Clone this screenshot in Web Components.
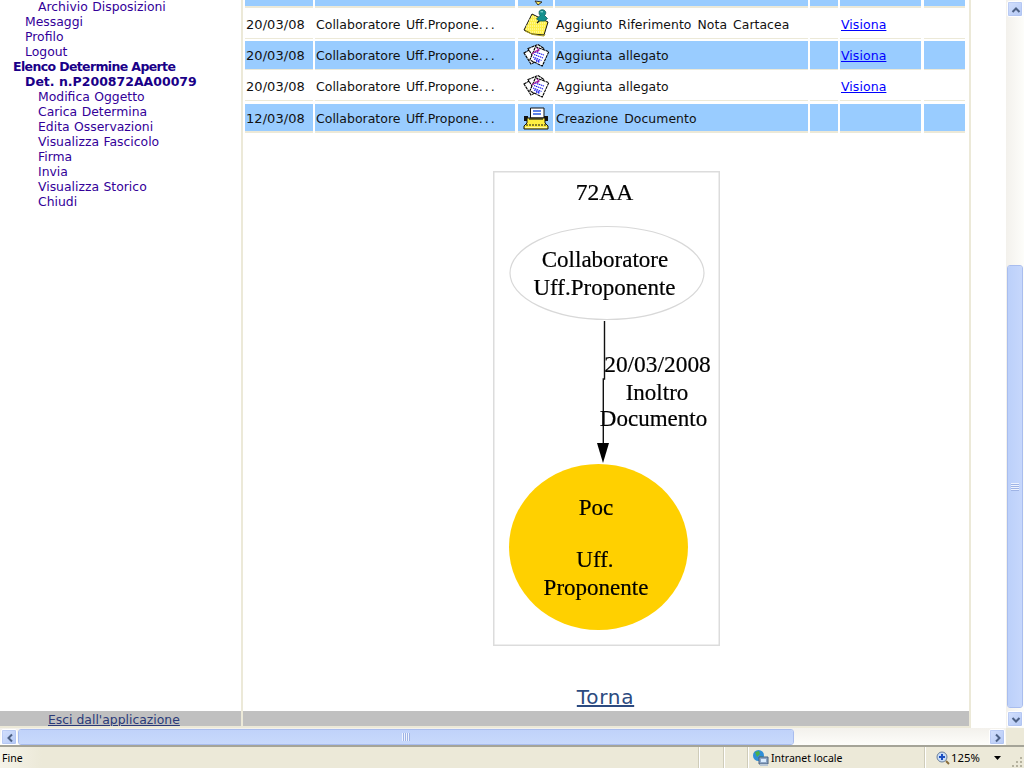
<!DOCTYPE html>
<html lang="it"><head><meta charset="utf-8"><title>Storico</title>
<style>html,body{margin:0;padding:0;height:100%;overflow:hidden;background:#fff}</style>
</head><body>
<app-window>
  <side-frame slot="side">
    <menu-link level="2">Archivio Disposizioni</menu-link>
    <menu-link level="1">Messaggi</menu-link>
    <menu-link level="1">Profilo</menu-link>
    <menu-link level="1">Logout</menu-link>
    <menu-link level="0" strong tight>Elenco Determine Aperte</menu-link>
    <menu-link level="1" strong>Det. n.P200872AA00079</menu-link>
    <menu-link level="2">Modifica Oggetto</menu-link>
    <menu-link level="2">Carica Determina</menu-link>
    <menu-link level="2">Edita Osservazioni</menu-link>
    <menu-link level="2">Visualizza Fascicolo</menu-link>
    <menu-link level="2">Firma</menu-link>
    <menu-link level="2">Invia</menu-link>
    <menu-link level="2">Visualizza Storico</menu-link>
    <menu-link level="2">Chiudi</menu-link>
  </side-frame>
  <main-frame slot="main">
    <data-row h="26" b="2" g="0" alt>
      <data-cell></data-cell><data-cell></data-cell><data-cell><app-icon name="stub"></app-icon></data-cell><data-cell></data-cell><data-cell></data-cell><data-cell></data-cell><data-cell></data-cell>
    </data-row>
    <data-row h="30" b="1" g="2" nudge>
      <data-cell>20/03/08</data-cell><data-cell>Collaboratore Uff.Propone<span style="letter-spacing:2px">...</span></data-cell><data-cell><app-icon name="note"></app-icon></data-cell><data-cell>Aggiunto Riferimento Nota Cartacea</data-cell><data-cell></data-cell><data-cell><a-link>Visiona</a-link></data-cell><data-cell></data-cell>
    </data-row>
    <data-row h="28" b="1" g="2" alt>
      <data-cell>20/03/08</data-cell><data-cell>Collaboratore Uff.Propone<span style="letter-spacing:2px">...</span></data-cell><data-cell><app-icon name="papers"></app-icon></data-cell><data-cell>Aggiunta allegato</data-cell><data-cell></data-cell><data-cell><a-link>Visiona</a-link></data-cell><data-cell></data-cell>
    </data-row>
    <data-row h="28" b="1" g="3">
      <data-cell>20/03/08</data-cell><data-cell>Collaboratore Uff.Propone<span style="letter-spacing:2px">...</span></data-cell><data-cell><app-icon name="papers"></app-icon></data-cell><data-cell>Aggiunta allegato</data-cell><data-cell></data-cell><data-cell><a-link>Visiona</a-link></data-cell><data-cell></data-cell>
    </data-row>
    <data-row h="27" b="2" g="0" alt nudge>
      <data-cell>12/03/08</data-cell><data-cell>Collaboratore Uff.Propone<span style="letter-spacing:2px">...</span></data-cell><data-cell><app-icon name="typewriter"></app-icon></data-cell><data-cell>Creazione Documento</data-cell><data-cell></data-cell><data-cell></data-cell><data-cell></data-cell>
    </data-row>
    <flow-chart></flow-chart>
    <back-link>Torna</back-link>
  </main-frame>
</app-window>
<script>
function tpl(html){const t=document.createElement('template');t.innerHTML=html;return t;}
function def(name,html,extra){
  const t=tpl(html);
  customElements.define(name,class extends HTMLElement{
    constructor(){super();this.attachShadow({mode:'open'}).appendChild(t.content.cloneNode(true));}
    connectedCallback(){if(extra)extra(this);}
  });
}
const FONT='"DejaVu Sans",Verdana,sans-serif';
const chevron=(d)=>`<svg width="16" height="16" viewBox="0 0 16 16"><path d="${d}" fill="none" stroke="#4d6185" stroke-width="2"/></svg>`;
def('scroll-btn',`<style>:host{display:block;width:16px;height:16px;box-sizing:border-box;border:1px solid #fff;border-radius:2px;background:linear-gradient(135deg,#d3e0fd,#b5c9f5);box-shadow:0 0 0 .5px #a9bdee inset;overflow:hidden}
svg{display:block;margin:-1px}</style><slot></slot>`);
def('v-scrollbar',`<style>:host{display:flex;flex-direction:column;width:18px;box-sizing:border-box;padding:1px;background:linear-gradient(90deg,#f3f1ec,#fdfdfa)}
.track{flex:1;position:relative;display:flex;flex-direction:column;padding-top:248px;padding-bottom:3px}
.thumb{flex:1;box-sizing:border-box;border:1px solid #fff;border-radius:3px;background:linear-gradient(90deg,#bcd0fa,#c6d7fc);outline:1px solid #a9bdee;outline-offset:-1px;display:flex;align-items:center;justify-content:center}
.grip{width:8px;height:8px;background:repeating-linear-gradient(180deg,#eef3fe 0 1px,#9fb4e6 1px 2px)}</style>
<scroll-btn>${chevron('M4.5 10l3.5-3.5 3.5 3.5')}</scroll-btn>
<div class="track"><div class="thumb"><div class="grip"></div></div></div>
<scroll-btn>${chevron('M4.5 6l3.5 3.5 3.5-3.5')}</scroll-btn>`);
def('h-scrollbar',`<style>:host{display:flex;height:17px;box-sizing:border-box;background:linear-gradient(180deg,#f3f1ec,#fdfdfa)}
.wrap{width:1006px;display:flex;padding:1px 1px 0 1px;box-sizing:border-box}
.thumb{width:776px;margin-left:1px;box-sizing:border-box;height:16px;border:1px solid #fff;border-radius:3px;background:linear-gradient(180deg,#c0d2fa,#c8d9fc);outline:1px solid #a9bdee;outline-offset:-1px;display:flex;align-items:center;justify-content:center}
.grip{width:8px;height:8px;background:repeating-linear-gradient(90deg,#eef3fe 0 1px,#9fb4e6 1px 2px)}
.sp{flex:1}.corner{flex:1;background:#ece9d8}</style>
<div class="wrap"><scroll-btn>${chevron('M10 4.5L6.5 8l3.5 3.5')}</scroll-btn><div class="thumb"><div class="grip"></div></div><div class="sp"></div><scroll-btn>${chevron('M6 4.5L9.5 8 6 11.5')}</scroll-btn></div><div class="corner"></div>`);
def('status-pane',`<style>:host{display:flex;align-items:center;gap:2px;box-sizing:border-box;height:100%;border-left:1px solid #cfccb9;box-shadow:inset 1px 0 0 #fff;padding-left:4px;white-space:nowrap}
:host([first]){border:0;box-shadow:none;padding-left:2px;flex:1;background:linear-gradient(90deg,#f5f3e9,#ece9d8 42px)}</style><slot></slot>`,
 el=>{if(el.hasAttribute('w'))el.style.width=el.getAttribute('w')+'px';});
def('status-bar',`<style>:host{display:flex;height:23px;box-sizing:border-box;background:#ece9d8;border-top:2px solid #a5a498;color:#000;font:10.5px "Noto Sans",Tahoma,sans-serif;align-items:stretch}
.grip{width:12px;position:relative}
svg{display:block}</style>
<status-pane first>Fine</status-pane>
<status-pane w="25"></status-pane><status-pane w="24"></status-pane>
<status-pane w="177"><svg width="17" height="18" viewBox="0 0 17 18"><circle cx="6.5" cy="6.5" r="5.5" fill="#2f8fd8"/><path d="M3 3l4-1 1 3-3 3zM8 7l3 1-1 3z" fill="#4bb04b"/><path d="M7 8h9v7H7z" fill="#8ea6c6" stroke="#47617f"/><path d="M9 10h5v3H9z" fill="#d9ecff"/><path d="M8 15h8v2H8z" fill="#b9c7d6"/></svg><span>Intranet locale</span></status-pane>
<status-pane w="88" style="gap:1px;padding-left:11px"><svg width="14" height="14" viewBox="0 0 14 14"><circle cx="6" cy="6" r="5" fill="#c9ddf7" stroke="#6b7f99"/><path d="M6 3v6M3 6h6" stroke="#1c4fc0" stroke-width="2"/><path d="M10 10l3 3" stroke="#8a6c3a" stroke-width="2"/></svg><span style="font-size:11.3px">125%</span><svg style="margin-left:13px" width="7" height="4" viewBox="0 0 7 4"><path d="M0 0h7L3.5 4z" fill="#000"/></svg></status-pane>
<div class="grip"><svg width="12" height="20" viewBox="0 0 12 20" style="position:absolute;right:1px;bottom:0"><g fill="#b5b29f"><path d="M9 9h2v2H9zM5 13h2v2H5zM9 13h2v2H9zM1 17h2v2H1zM5 17h2v2H5zM9 17h2v2H9z"/></g></svg></div>`);
def('app-window',`<style>:host{display:grid;grid-template-rows:728px 17px 23px;width:1024px;height:768px;overflow:hidden;font:13px ${FONT};color:#111}
.view{display:flex;min-height:0}
.page{width:1006px;display:grid;grid-template-columns:241px 730px 35px;background:#fff;min-height:0}
.gap{background:#fff;height:727px}
::slotted(*){min-width:0}</style>
<div class="view"><div class="page"><slot name="side"></slot><slot name="main"></slot><div class="gap"></div></div><v-scrollbar></v-scrollbar></div>
<h-scrollbar></h-scrollbar>
<status-bar></status-bar>`);
def('frame-box',`<style>:host{display:grid;grid-template-rows:711px 15px 2px;height:728px;box-sizing:border-box}
.body{overflow:hidden;min-height:0;background:#fff;border-right:2px solid #ece9d8}
.foot{background:#c0c0c0;border-right:2px solid #ece9d8;overflow:hidden}
.base{background:#ece9d8}</style>
<div class="body"><slot></slot></div><div class="foot"><slot name="foot"></slot></div><div class="base"></div>`);
def('side-frame',`<style>:host{display:block;width:243px;margin-right:-2px}
.list{display:flex;flex-direction:column;margin-top:-1px}
.esc{display:block;padding-left:48px;line-height:17px;color:#2b3a78;text-decoration:underline;font-size:12.4px}</style>
<frame-box><div class="list"><slot></slot></div><span slot="foot" class="esc">Esci dall'applicazione</span></frame-box>`);
def('menu-link',`<style>:host{display:block;height:15px;line-height:15px;color:#330099;white-space:nowrap;font-size:12.4px;word-spacing:.5px}
:host([level="0"]){padding-left:13px}:host([level="1"]){padding-left:25px}:host([level="2"]){padding-left:38px}
:host([strong]){font-weight:bold;color:#1a0088;font-size:12.5px;word-spacing:0}
:host([tight]){letter-spacing:-.63px}</style><slot></slot>`);
def('main-frame',`<style>:host{display:block;width:728px;margin-left:2px;position:relative}
.wrap{width:726px;margin-top:-20px;display:flex;flex-direction:column;align-items:stretch}</style>
<frame-box><div class="wrap"><slot></slot></div></frame-box>`);
def('data-row',`<style>:host{display:grid;grid-template-columns:68px 200px 36px 253px 28px 81px 42px;column-gap:2px;width:720px;margin-left:2px;box-sizing:border-box;align-items:stretch}</style><slot></slot>`,
 el=>{const h=+el.getAttribute('h'),b=+el.getAttribute('b'),g=+el.getAttribute('g');
  el.style.setProperty('--h',h+'px');el.style.setProperty('--b',b+'px');el.style.marginBottom=g+'px';
  el.style.setProperty('--bg',el.hasAttribute('alt')?'#99ccff':'#fff');
  el.style.setProperty('--pt',el.hasAttribute('nudge')?'2px':'0px');
  const k=el.children;
  k[1].setAttribute('k','who');k[2].setAttribute('narrow','');k[3].setAttribute('k','desc');k[5].setAttribute('k','link');k[6].setAttribute('narrow','');});
def('data-cell',`<style>:host{display:flex;align-items:center;padding:var(--pt) 0 0 1px;background:var(--bg);box-sizing:content-box;height:calc(var(--h) - var(--pt));border-bottom:var(--b) solid #ece9d8;white-space:pre;overflow:hidden;color:#111;word-spacing:1.5px;letter-spacing:.06px}
:host([k="who"]){font-size:12.5px;letter-spacing:0}
:host([k="desc"]){font-size:12.4px;word-spacing:2px}
:host([k="link"]){font-size:12.5px}
:host([narrow]){margin-left:1px;justify-content:center;padding:0;height:var(--h)}
.t{display:block}</style><div class="t"><slot></slot></div>`);
def('a-link',`<style>:host{color:#0000ff;text-decoration:underline}</style><slot></slot>`);
const icons={
 stub:`<svg width="30" height="26" viewBox="0 0 30 26"><path d="M14 21l3 4 4-3z" fill="#ffe957" stroke="#333" stroke-width="1"/></svg>`,
 note:`<svg width="30" height="28" viewBox="0 0 30 28">
 <path d="M11 5L27 13 23 26 11 25 3 21z" fill="#fff04a" stroke="#111" stroke-width="1"/>
 <g stroke="#fffdd0" stroke-width="1" stroke-dasharray="1 1"><path d="M10 8h6M8 11h12M7 14h17M5 17h19M5 20h19M9 23h13"/></g>
 <path d="M4 22l8 3.500 11 1.500 1-2" fill="none" stroke="#a89a20"/>
 <path d="M19 11l-3 3" stroke="#111" stroke-width="1.300"/><path d="M18 2.500a3.800 3.800 0 0 1 6.500 0c.6 1.500 0 3-1 4l3 3-3 2.500h-5l-3-2 3.500-3.500c-1-1.300-1.200-2.800-.5-4z" fill="#14908e" stroke="#0b5555" stroke-width=".8"/><path d="M19.500 2.800l2.500 0" stroke="#9fe8e4"/></svg>`,
 papers:`<svg width="30" height="24" viewBox="0 0 30 24"><g stroke="#000" stroke-width="1.100" fill="#fff" stroke-dasharray="3 .6"><path d="M3 10l9-5 6 12-8 4z"/><path d="M7 5.500l10-4 6 4-8 13z"/><path d="M14.500 3.700L27.800 8.700 21.200 23 8.800 17z"/></g>
 <g stroke="#1a1aee" stroke-width="1.100" stroke-dasharray="1.500 .6"><path d="M14 9l9 3M13 11.500l9 3.500M12 14l8.500 3.500M13 16l6 2.500M15 18l4 1.500"/></g><path d="M11 11l4-3 3-1M16 5l2 2-2 2" fill="none" stroke="#a020a0" stroke-width="1.300"/></svg>`,
 typewriter:`<svg width="30" height="26" viewBox="0 0 30 26"><path d="M9.500 3H23v10H9.500z" fill="#fff" stroke="#111"/><path d="M12 6h8M12 9h8" stroke="#2a5ae0" stroke-width="1.500"/><path d="M3 11h4v5H3zM23 11h4v5h-4z" fill="#111"/><path d="M6 13h18v5l3 3v3H3v-3l3-3z" fill="#ffef40" stroke="#111"/><path d="M8 14h14" stroke="#111" stroke-width="1.200"/><path d="M5 20h20" stroke="#111" stroke-dasharray="2 1"/><path d="M4 22.500h22" stroke="#fff9a0"/></svg>`
};
def('app-icon',`<style>:host{display:flex;align-items:center;justify-content:center;height:100%}svg{display:block}</style><span id="i" style="display:contents"></span>`,
 el=>{el.shadowRoot.getElementById('i').innerHTML=icons[el.getAttribute('name')]||'';if(el.getAttribute('name')==='stub')el.style.alignItems='flex-end';});
def('flow-chart',`<style>:host{display:block;width:227px;height:475px;margin:38px 0 0 250px}
svg{display:block;filter:blur(.35px)}text{font-family:"Liberation Serif","Times New Roman",serif;fill:#000;stroke:#000;stroke-width:.2;text-anchor:middle}</style>
<svg width="227" height="475" viewBox="0 0 227 475">
<rect x=".75" y=".75" width="225.5" height="473.500" fill="#fff" stroke="#dcdcdc" stroke-width="1.500"/>
<text x="111.500" y="29" font-size="23.500">72AA</text>
<ellipse cx="114" cy="102" rx="97" ry="46.500" fill="#fff" stroke="#d8d8d8" stroke-width="1.200"/>
<text x="112" y="96" font-size="23">Collaboratore</text>
<text x="111.500" y="124" font-size="23">Uff.Proponente</text>
<path d="M111.500 150v58h-1.200v65" fill="none" stroke="#111" stroke-width="1.400"/>
<path d="M104 272h12l-6 20z" fill="#000"/>
<text x="164.500" y="201" font-size="23.400">20/03/2008</text>
<text x="164" y="229" font-size="23">Inoltro</text>
<text x="160.500" y="255" font-size="23">Documento</text>
<ellipse cx="105.500" cy="376" rx="89.500" ry="83" fill="#ffd000"/>
<text x="103" y="344" font-size="23">Poc</text>
<text x="102" y="396" font-size="23">Uff.</text>
<text x="103" y="424" font-size="23">Proponente</text>
</svg>`);
def('back-link',`<style>:host{display:block;text-align:center;margin-top:38px;width:725px;line-height:26px;font-size:20px;letter-spacing:.7px;color:#2c4a80;text-decoration:underline}</style><slot></slot>`);
</script>
</body></html>
